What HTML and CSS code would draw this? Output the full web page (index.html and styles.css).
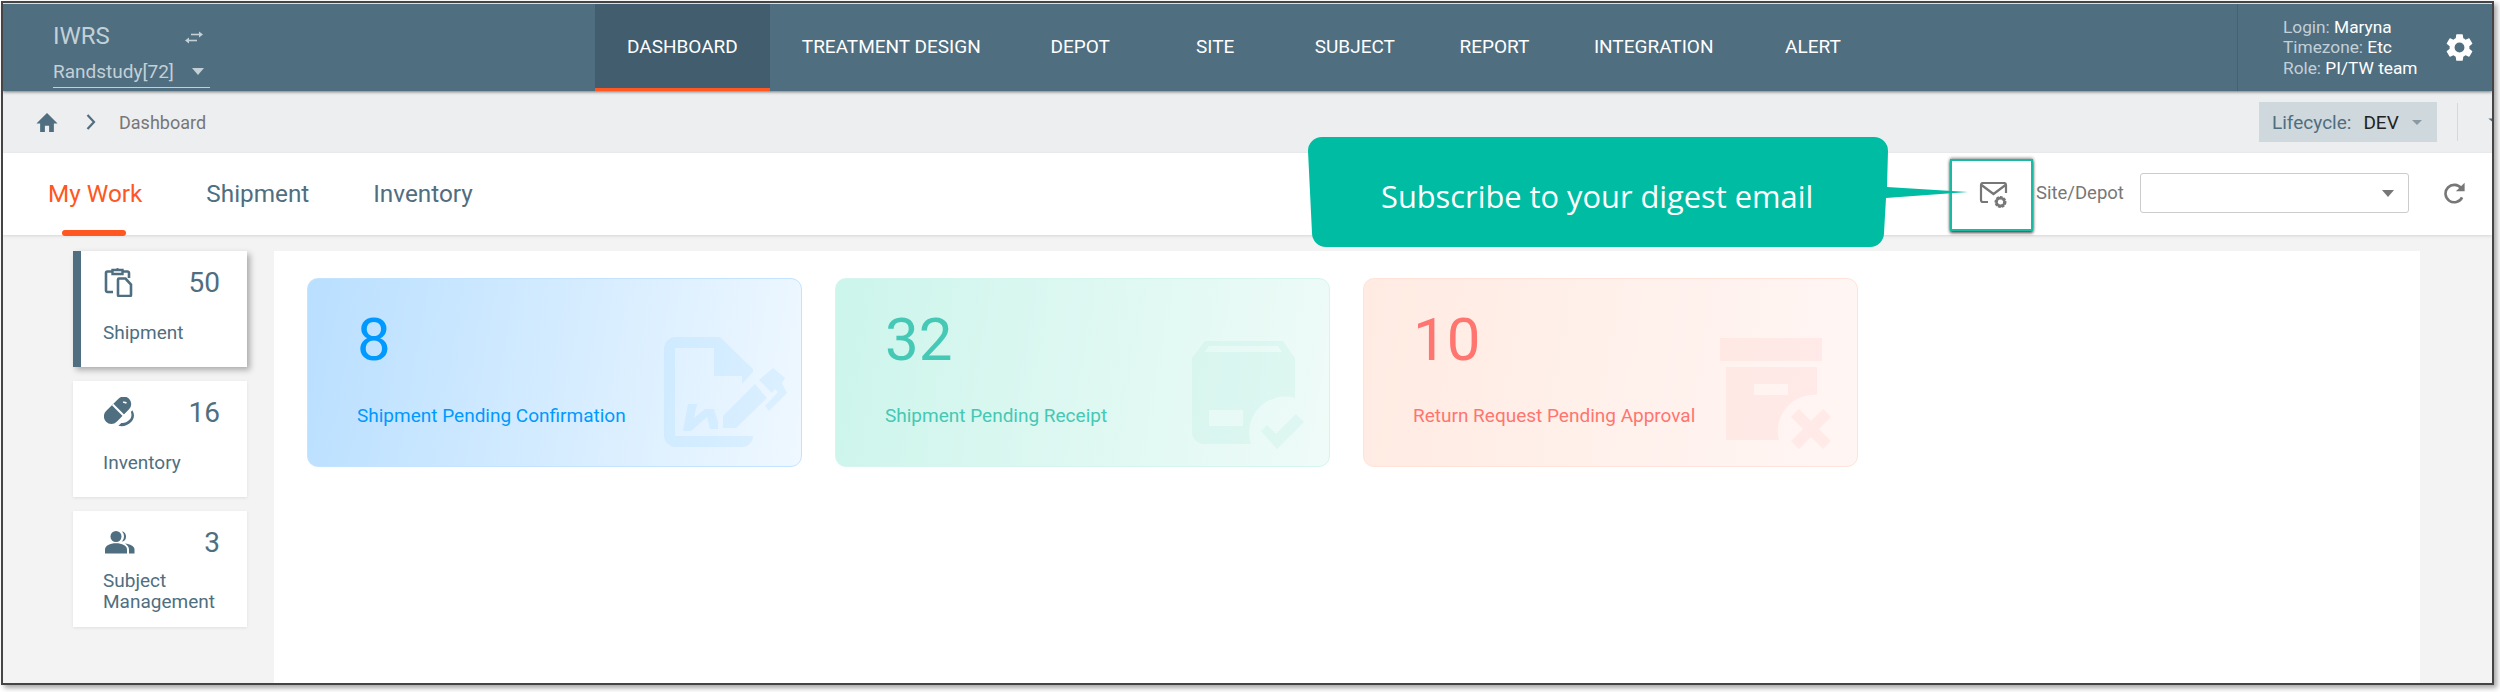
FILE: index.html
```html
<!DOCTYPE html>
<html lang="en">
<head>
    <meta charset="UTF-8">
    <title>IWRS Dashboard</title>
    <link rel="stylesheet" href="styles.css">
</head>
<body>
<div class="frame">
    <header class="topbar">
        <div class="brand">
            <div class="brand-row">
                <span class="brand-name">IWRS</span>
                <svg class="swap-icon" viewBox="0 0 18 13" width="18" height="13"><path d="M6 3.500h9" fill="none" stroke="#c3d0d7" stroke-width="1.600"/><path d="M14 .5 18 3.500 14 6.500z" fill="#c3d0d7"/><path d="M12 9.500H3" fill="none" stroke="#c3d0d7" stroke-width="1.600"/><path d="M4 6.500 0 9.500 4 12.500z" fill="#c3d0d7"/></svg>
            </div>
            <div class="study-select">
                <span>Randstudy[72]</span>
                <i class="caret caret-light"></i>
            </div>
        </div>
        <nav class="main-nav">
            <a class="nav-item active">DASHBOARD</a>
            <a class="nav-item">TREATMENT DESIGN</a>
            <a class="nav-item">DEPOT</a>
            <a class="nav-item">SITE</a>
            <a class="nav-item">SUBJECT</a>
            <a class="nav-item">REPORT</a>
            <a class="nav-item">INTEGRATION</a>
            <a class="nav-item">ALERT</a>
        </nav>
        <div class="user-box">
            <div class="user-info">
                <div>Login: <b>Maryna</b></div>
                <div>Timezone: <b>Etc</b></div>
                <div>Role: <b>PI/TW team</b></div>
            </div>
            <svg class="gear" viewBox="0 0 24 24" width="33" height="33"><path fill="#fff" d="M19.140 12.940c.04-.3.060-.61.060-.94s-.02-.64-.07-.94l2.030-1.580a.49.490 0 0 0 .12-.61l-1.920-3.320a.49.490 0 0 0-.59-.22l-2.390.96a7 7 0 0 0-1.620-.94l-.36-2.540a.48.480 0 0 0-.48-.41h-3.840a.48.480 0 0 0-.47.41l-.36 2.540c-.59.24-1.130.57-1.620.94l-2.390-.96a.49.490 0 0 0-.59.22L2.740 8.870a.48.480 0 0 0 .12.61l2.030 1.580c-.05.3-.09.63-.09.94s.02.64.07.94l-2.030 1.580a.49.490 0 0 0-.12.61l1.920 3.320c.12.22.37.29.59.22l2.390-.96c.5.380 1.030.7 1.620.94l.36 2.540c.05.24.24.41.48.41h3.840c.24 0 .44-.17.47-.41l.36-2.540c.59-.24 1.130-.56 1.620-.94l2.390.96c.22.08.47 0 .59-.22l1.920-3.320a.48.480 0 0 0-.12-.61l-2.010-1.580zM12 15.600A3.600 3.600 0 1 1 12 8.400a3.600 3.600 0 0 1 0 7.200z"/></svg>
        </div>
    </header>

    <div class="crumbs">
        <svg class="home" viewBox="0 0 20 18" width="22" height="19"><path fill="#4f6e80" d="M8 18v-6h4v6h4.500v-8H20L10 0 0 10h3.500v8z"/></svg>
        <svg class="chevron" viewBox="0 0 10 16" width="10" height="16"><path d="M1.500 1 8 8l-6.500 7" fill="none" stroke="#4f6e80" stroke-width="2.200"/></svg>
        <span class="crumb-text">Dashboard</span>
        <div class="crumb-right">
            <div class="lifecycle">
                <span class="lifecycle-label">Lifecycle:</span>
                <span class="lifecycle-value">DEV</span>
                <i class="caret caret-small"></i>
            </div>
            <span class="crumb-sep"></span>
            <svg class="star" viewBox="0 0 24 24" width="28" height="28"><path fill="#4f6e80" d="M12 2l3 7h7l-5.500 4.500L18.500 21 12 16.800 5.500 21l2-7.500L2 9h7z"/></svg>
        </div>
    </div>

    <div class="tabbar">
        <a class="tab active">My Work</a>
        <a class="tab">Shipment</a>
        <a class="tab">Inventory</a>
        <div class="tab-tools">
            <div class="digest-btn">
                <svg viewBox="0 0 28 27" width="30" height="27">
                    <path d="M8 20H3a2 2 0 0 1-2-2V3a2 2 0 0 1 2-2h21a2 2 0 0 1 2 2v8M1.500 3 13.500 12 25.500 3" fill="none" stroke="#777" stroke-width="2.200"/>
                    <circle cx="20.500" cy="20" r="4.300" fill="none" stroke="#777" stroke-width="3.400" stroke-dasharray="2.300 .9"/>
                    <circle cx="20.500" cy="20" r="4" fill="none" stroke="#777" stroke-width="2.400"/>
                </svg>
            </div>
            <label class="site-label">Site/Depot</label>
            <div class="site-select"><i class="caret caret-grey"></i></div>
            <svg class="refresh" viewBox="0 0 20 22" width="22" height="24"><path d="M16.500 15a8 8 0 1 1-.8-8.300" fill="none" stroke="#777" stroke-width="2.400"/><path fill="#777" d="M18.800 1.500v8h-8z"/></svg>
        </div>
    </div>

    <div class="content">
        <aside class="side">
            <div class="side-card selected">
                <div class="side-top">
                    <svg viewBox="0 0 29 30" width="29" height="30"><path d="M9 25H3.500A1.500 1.500 0 0 1 2 23.500V6a1.500 1.500 0 0 1 1.500-1.500H8M19 4.500h4.500A1.500 1.500 0 0 1 25 6v5" fill="none" stroke="#4f6e80" stroke-width="2.600"/><path d="M8.500 3h10v4h-10z" fill="none" stroke="#4f6e80" stroke-width="2.400"/><circle cx="13.500" cy="2.500" r="1.500" fill="#4f6e80"/><path d="M15 11.500h6.500l5.500 6V28a1 1 0 0 1-1 1H15a1 1 0 0 1-1-1V12.500a1 1 0 0 1 1-1z" fill="none" stroke="#4f6e80" stroke-width="2.600"/></svg>
                    <span class="side-count">50</span>
                </div>
                <div class="side-label">Shipment</div>
            </div>
            <div class="side-card">
                <div class="side-top">
                    <svg viewBox="2 2 26 26" width="30" height="30"><path fill="#4f6e80" d="M14.500 3.500a6.500 6.500 0 0 1 9.200 9.200L13 23.400a6.500 6.500 0 0 1-9.200-9.200z"/><path d="M9.500 8.500l9.500 9.500" stroke="#fff" stroke-width="1.800"/><path d="M18.500 6.500a3.500 3.500 0 0 1 3 1" stroke="#fff" stroke-width="1.300" fill="none"/><path fill="#4f6e80" d="M26.500 13.500c2 3 2.200 7-1 10.200-3 3-6.800 4.400-11 3.300l2.500-2.500c2.500.3 4.800-.5 6.800-2.500 2.200-2.200 2.400-4.700 1.500-7z"/></svg>
                    <span class="side-count">16</span>
                </div>
                <div class="side-label">Inventory</div>
            </div>
            <div class="side-card">
                <div class="side-top">
                    <svg viewBox="0 0 31 24" width="31" height="24"><circle cx="12" cy="6.500" r="5.500" fill="#4f6e80"/><path fill="#4f6e80" d="M1 23.500v-4c0-3.800 5-6.200 11-6.200s11 2.400 11 6.200v4z"/><path fill="#4f6e80" d="M18 1.200a5.500 5.500 0 0 1 0 10.600 8 8 0 0 0 0-10.600zM21 13.500c5 .6 9.500 2.600 9.500 6v4H25v-4c0-2.500-1.500-4.500-4-6z"/></svg>
                    <span class="side-count">3</span>
                </div>
                <div class="side-label">Subject Management</div>
            </div>
        </aside>

        <main class="panel">
            <div class="kpi kpi-blue">
                <div class="kpi-num">8</div>
                <div class="kpi-label">Shipment Pending Confirmation</div>
                <svg class="kpi-icon" viewBox="0 0 124 112" width="124" height="112">
                    <path fill="#0099ff" fill-opacity=".07" d="M12 0H56L89 32V35L78 47V39H50V11H11V99H89A11 11 0 0 1 78 110H12A12 12 0 0 1 0 98V12A12 12 0 0 1 12 0z"/>
                    <path fill="#0099ff" fill-opacity=".07" d="M19 94 24 67h9l-3 14 11-9h9l4 13v7h-8l-3-12-16 14zM59 79 91 47 103 61 72 91H59zM95 43 109 31 121 41 118 46 123 56 105 74 101 69 114 55 111 52 108 56z"/>
                </svg>
            </div>
            <div class="kpi kpi-green">
                <div class="kpi-num">32</div>
                <div class="kpi-label">Shipment Pending Receipt</div>
                <svg class="kpi-icon" viewBox="0 -4 124 112" width="124" height="112">
                    <path fill="#45c8b5" fill-opacity=".08" fill-rule="evenodd" d="M13 0H91L103 17V57A36 36 0 0 0 59 103H12A12 12 0 0 1 0 91V17zM17 5 12 11H90L86 5zM17 69V85H51V69z"/>
                    <path fill="#45c8b5" fill-opacity=".08" d="M69 90 75 84 84 93 104 73 112 81 85 108z"/>
                </svg>
            </div>
            <div class="kpi kpi-red">
                <div class="kpi-num">10</div>
                <div class="kpi-label">Return Request Pending Approval</div>
                <svg class="kpi-icon" viewBox="0 -1 124 112" width="124" height="112">
                    <path fill="#ff7570" fill-opacity=".08" d="M0 0h102v23H0z"/>
                    <path fill="#ff7570" fill-opacity=".08" fill-rule="evenodd" d="M6 29H97V57A36 36 0 0 0 59 102H6zM34 46V57H68V46z"/>
                    <path fill="#ff7570" fill-opacity=".08" d="M79 71 91 83 103 71 111 79 99 91 111 103 103 111 91 99 79 111 71 103 83 91 71 79z"/>
                </svg>
            </div>
        </main>
    </div>

    <div class="digest-callout">
        <svg viewBox="0 0 665 114" width="665" height="114" class="callout-shape"><path fill="#00bca3" d="M17 2H569A14 14 0 0 1 583 16L582 52 663 57 581 63 579 98A14 14 0 0 1 565 112H21A14 14 0 0 1 7 98L3 16A14 14 0 0 1 17 2z"/></svg>
        <span class="callout-text">Subscribe to your digest email</span>
    </div>
</div>
</body>
</html>
```

FILE: styles.css
```css
* {
    box-sizing: border-box;
}
html, body {
    margin: 0;
    padding: 0;
    background-color: #fff;
    overflow: hidden;
}
body {
    font-family: Roboto, "Liberation Sans", sans-serif;
    width: 2500px;
    height: 692px;
}
.frame {
    position: relative;
    width: 2493px;
    height: 684px;
    margin: 1px 0 0 1px;
    border: 2px solid #444;
    box-shadow: 3px 3px 5px rgba(0, 0, 0, .35);
    display: flex;
    flex-direction: column;
    overflow: hidden;
    background-color: #f3f3f3;
}

/* top bar */
.topbar {
    height: 87px;
    margin-top: 1px;
    background-color: #4f6e80;
    display: flex;
    box-shadow: 0 1px 3px rgba(0, 0, 0, .5);
    position: relative;
    z-index: 2;
    flex: none;
}
.brand {
    width: 592px;
    flex: none;
    padding: 14px 0 0 50px;
    color: #c3d0d7;
}
.brand-row {
    display: flex;
    align-items: center;
    height: 36px;
}
.brand-name {
    font-size: 24px;
    width: 132px;
}
.swap-icon {
    margin-top: 2px;
}
.study-select {
    display: flex;
    align-items: center;
    justify-content: space-between;
    width: 157px;
    height: 32px;
    font-size: 19px;
    margin-top: 2px;
    padding-right: 6px;
    border-bottom: 1px solid #c3d0d7;
}
.caret {
    display: block;
    width: 0;
    height: 0;
    border-left: 6px solid transparent;
    border-right: 6px solid transparent;
    border-top: 7px solid #c3d0d7;
}
.main-nav {
    display: flex;
}
.nav-item {
    display: flex;
    align-items: center;
    justify-content: center;
    min-width: 135px;
    padding: 0 32px;
    color: #fff;
    font-size: 19px;
    border-bottom: 3px solid transparent;
}
.nav-item.active {
    background-color: #415d6e;
    border-bottom-color: #ff5722;
}
.user-box {
    margin-left: auto;
    width: 255px;
    flex: none;
    border-left: 1px solid #456273;
    display: flex;
    align-items: center;
    padding-left: 45px;
}
.user-info {
    color: #c3d0d7;
    font-size: 17.300px;
    line-height: 20.500px;
    width: 160px;
    flex: none;
    white-space: nowrap;
}
.user-info b {
    color: #fff;
    font-weight: 400;
}

/* breadcrumb row */
.crumbs {
    height: 62px;
    flex: none;
    background-color: #edeef0;
    display: flex;
    align-items: center;
    padding-left: 33px;
}
.chevron {
    margin-left: 28px;
}
.crumb-text {
    margin-left: 23px;
    font-size: 18px;
    color: #777;
}
.crumb-right {
    margin-left: auto;
    display: flex;
    align-items: center;
    margin-right: -22px;
}
.lifecycle {
    width: 178px;
    height: 40px;
    background-color: #cfd8dc;
    display: flex;
    align-items: center;
    padding-left: 13px;
    font-size: 19px;
    color: #4f6e80;
}
.lifecycle-value {
    color: #222;
    margin-left: 12px;
}
.caret-small {
    margin-left: 13px;
    border-left-width: 5px;
    border-right-width: 5px;
    border-top: 5px solid #8a9aa4;
}
.crumb-sep {
    width: 1px;
    height: 38px;
    margin-left: 20px;
    background-color: #d5d8db;
}
.star {
    margin-left: 28px;
}

/* tabs */
.tabbar {
    height: 82px;
    flex: none;
    background-color: #fff;
    display: flex;
    align-items: center;
    padding: 0 0 2px 45px;
    box-shadow: 0 1px 3px rgba(0, 0, 0, .12);
    position: relative;
    z-index: 1;
}
.tab {
    font-size: 24.300px;
    color: #4f6e80;
    margin-right: 64px;
    position: relative;
}
.tab.active {
    color: #ff5722;
}
.tab.active::after {
    content: "";
    position: absolute;
    left: 14px;
    width: 64px;
    bottom: -28px;
    height: 6px;
    border-radius: 3px;
    background-color: #ff5722;
}
.tab-tools {
    margin-left: auto;
    display: flex;
    align-items: center;
    padding-right: 26px;
}
.digest-btn {
    width: 83px;
    height: 72px;
    margin-top: 4px;
    border: 2px solid #1cb9a2;
    box-shadow: 0 2px 3px rgba(0, 0, 0, .7), 0 -1px 3px rgba(0, 0, 0, .4);
    display: flex;
    align-items: center;
    justify-content: center;
    padding-left: 5px;
}
.site-label {
    font-size: 18.500px;
    color: #777;
    margin-left: 3px;
    width: 104px;
}
.site-select {
    width: 269px;
    height: 40px;
    border: 1px solid #ccc;
    border-radius: 3px;
    display: flex;
    align-items: center;
    justify-content: flex-end;
    padding-right: 14px;
}
.caret-grey {
    border-top-color: #777;
}
.refresh {
    margin-left: 35px;
}

/* content */
.content {
    flex: 1;
    display: flex;
    padding: 16px 0 0 70px;
    min-height: 0;
}
.side {
    width: 174px;
    display: flex;
    flex-direction: column;
    gap: 14px;
    flex: none;
}
.side-card {
    height: 116px;
    background-color: #fff;
    box-shadow: 0 1px 3px rgba(0, 0, 0, .08);
    padding: 16px 0 0 30px;
    color: #4f6e80;
}
.side-card.selected {
    border-left: 8px solid #4f6e80;
    padding-left: 22px;
    box-shadow: 3px 3px 6px rgba(0, 0, 0, .3);
}
.side-top {
    display: flex;
    justify-content: space-between;
    align-items: center;
    height: 30px;
    padding-right: 27px;
    margin-left: 1px;
}
.side-count {
    font-size: 28px;
}
.side-label {
    font-size: 19px;
    line-height: 21px;
    margin-top: 25px;
    width: 130px;
}
.side-card:last-child .side-label {
    margin-top: 13px;
}
.panel {
    margin-left: 27px;
    width: 2146px;
    background-color: #fff;
    display: flex;
    gap: 33px;
    padding: 27px 0 0 33px;
    align-items: flex-start;
}
.kpi {
    position: relative;
    width: 495px;
    height: 189px;
    border-radius: 11px;
    padding: 30px 0 0 49px;
}
.kpi-num {
    font-size: 60px;
    line-height: 62px;
}
.kpi-label {
    font-size: 19px;
    line-height: 22px;
    margin-top: 34px;
}
.kpi-icon {
    position: absolute;
    left: 356px;
    top: 58px;
}
.kpi-blue {
    color: #0099ff;
    border: 1px solid #c4e3ff;
    background-image: linear-gradient(100deg, #b9dfff, #eff8ff);
}
.kpi-green {
    color: #45c8b5;
    border: 1px solid #d5f5ee;
    background-image: linear-gradient(100deg, #ccf5eb, #effbf8);
}
.kpi-red {
    color: #ff7570;
    border: 1px solid #ffe3da;
    background-image: linear-gradient(100deg, #ffebe2, #fff6f4);
}

/* callout pointing at the digest button */
.digest-callout {
    position: absolute;
    left: 1302px;
    top: 132px;
    width: 665px;
    height: 114px;
    z-index: 5;
}
.callout-shape {
    display: block;
}
.callout-text {
    position: absolute;
    left: 76px;
    top: 41px;
    font-family: "Open Sans", sans-serif;
    font-size: 30.800px;
    line-height: 40px;
    color: #fff;
    white-space: nowrap;
}
```
